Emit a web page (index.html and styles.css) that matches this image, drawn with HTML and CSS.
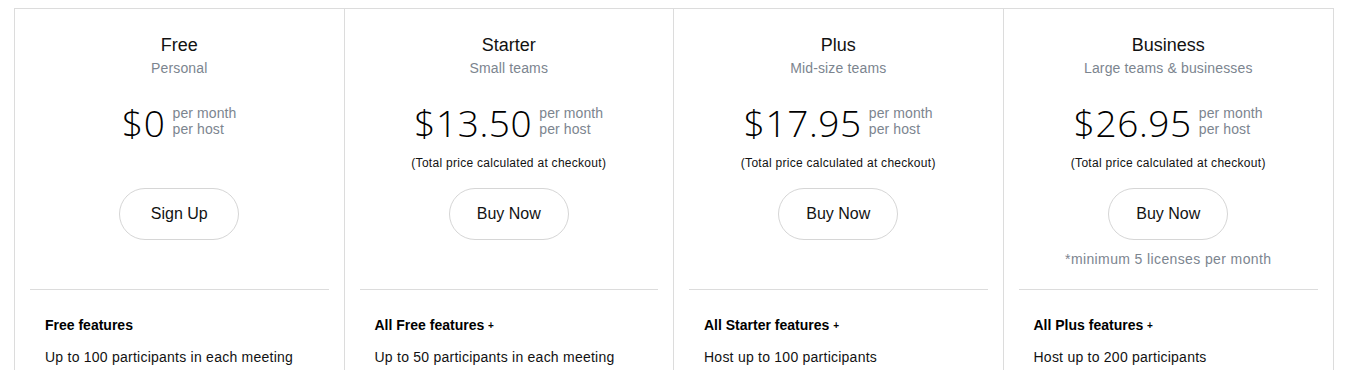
FILE: index.html
```html
<!DOCTYPE html>
<html lang="en">
<head>
<meta charset="utf-8">
<title>Plans</title>
<link rel="stylesheet" href="styles.css">
</head>
<body>
<div class="plans">
  <div class="plan">
    <div class="top">
      <h2 class="name">Free</h2>
      <div class="sub">Personal</div>
      <div class="price-row">
        <span class="price">$0</span>
        <span class="per">per month<br>per host</span>
      </div>
      <div class="note note-empty">&nbsp;</div>
      <a class="btn" href="#">Sign Up</a>
    </div>
    <div class="rule"></div>
    <div class="features">
      <div class="feat-head">Free features</div>
      <div class="feat">Up to 100 participants in each meeting</div>
    </div>
  </div>
  <div class="plan">
    <div class="top">
      <h2 class="name">Starter</h2>
      <div class="sub">Small teams</div>
      <div class="price-row">
        <span class="price">$13.50</span>
        <span class="per">per month<br>per host</span>
      </div>
      <div class="note">(Total price calculated at checkout)</div>
      <a class="btn" href="#">Buy Now</a>
    </div>
    <div class="rule"></div>
    <div class="features">
      <div class="feat-head">All Free features <span class="plus">+</span></div>
      <div class="feat">Up to 50 participants in each meeting</div>
    </div>
  </div>
  <div class="plan">
    <div class="top">
      <h2 class="name">Plus</h2>
      <div class="sub">Mid-size teams</div>
      <div class="price-row">
        <span class="price">$17.95</span>
        <span class="per">per month<br>per host</span>
      </div>
      <div class="note">(Total price calculated at checkout)</div>
      <a class="btn" href="#">Buy Now</a>
    </div>
    <div class="rule"></div>
    <div class="features">
      <div class="feat-head">All Starter features <span class="plus">+</span></div>
      <div class="feat">Host up to 100 participants</div>
    </div>
  </div>
  <div class="plan">
    <div class="top">
      <h2 class="name">Business</h2>
      <div class="sub">Large teams &amp; businesses</div>
      <div class="price-row">
        <span class="price">$26.95</span>
        <span class="per">per month<br>per host</span>
      </div>
      <div class="note">(Total price calculated at checkout)</div>
      <a class="btn" href="#">Buy Now</a>
      <div class="minimum">*minimum 5 licenses per month</div>
    </div>
    <div class="rule"></div>
    <div class="features">
      <div class="feat-head">All Plus features <span class="plus">+</span></div>
      <div class="feat">Host up to 200 participants</div>
    </div>
  </div>
</div>
</body>
</html>
```

FILE: styles.css
```css
* { box-sizing: border-box; }

body {
  margin: 0;
  padding: 8px 14px 0;
  background: #fff;
  font-family: "Liberation Sans", Arial, sans-serif;
  color: #121212;
}

.plans {
  width: 1320px;
  display: grid;
  grid-template-columns: repeat(4, 1fr);
  border: 1px solid #dcdcdc;
  border-bottom: none;
}

.plan {
  border-right: 1px solid #dcdcdc;
  min-height: 361px;
}
.plan:last-child { border-right: none; }

.top {
  height: 280px;
  padding-top: 24px;
  display: flex;
  flex-direction: column;
  align-items: center;
  text-align: center;
}

.name {
  margin: 0;
  font-size: 18px;
  line-height: 24px;
  font-weight: normal;
  color: #121212;
}

.sub {
  margin-top: 1px;
  font-size: 14px;
  line-height: 20px;
  letter-spacing: 0.15px;
  color: #7c858f;
}

.price-row {
  margin-top: 23px;
  height: 44px;
  display: flex;
  align-items: center;
  gap: 7px;
}

.price {
  font-family: "Open Sans", "Liberation Sans", sans-serif;
  font-weight: 300;
  font-size: 37px;
  line-height: 44px;
  letter-spacing: 0.6px;
  color: #000;
}

.per {
  text-align: left;
  font-size: 14px;
  line-height: 16px;
  letter-spacing: 0.1px;
  color: #7c858f;
  margin-bottom: 4px;
}

.note {
  margin-top: 10px;
  font-size: 12px;
  line-height: 16px;
  letter-spacing: 0.28px;
  color: #121212;
}

.btn {
  margin-top: 17px;
  width: 120px;
  height: 52px;
  border: 1px solid #d6d6d6;
  border-radius: 26px;
  display: flex;
  align-items: center;
  justify-content: center;
  font-size: 16px;
  color: #121212;
  text-decoration: none;
}

.minimum {
  margin-top: 9px;
  font-size: 14px;
  line-height: 20px;
  letter-spacing: 0.38px;
  color: #7c858f;
}

.rule {
  margin: 0 15px;
  height: 1px;
  background: #dcdcdc;
}

.features {
  padding: 25px 30px 0;
}

.feat-head {
  font-size: 14px;
  line-height: 20px;
  font-weight: bold;
  color: #000;
}

.plus {
  font-size: 10px;
  line-height: 0;
  vertical-align: 1px;
}

.feat {
  margin-top: 12px;
  font-size: 14px;
  line-height: 20px;
  letter-spacing: 0.24px;
  color: #121212;
}
```
